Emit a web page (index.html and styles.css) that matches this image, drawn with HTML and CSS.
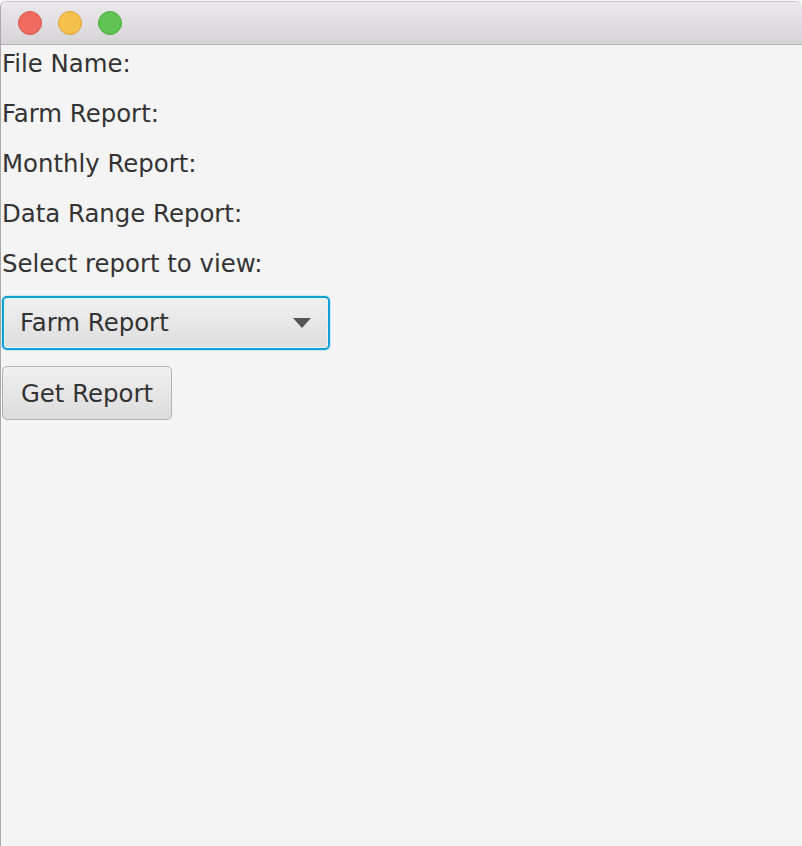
FILE: index.html
```html
<!DOCTYPE html>
<html>
<head>
<meta charset="utf-8">
<link rel="stylesheet" href="styles.css">
</head>
<body>
<div class="window">
  <div class="titlebar">
    <span class="light red"></span>
    <span class="light yellow"></span>
    <span class="light green"></span>
  </div>
  <div class="content">
    <div class="labels">
      <div class="label">File Name:</div>
      <div class="label">Farm Report:</div>
      <div class="label">Monthly Report:</div>
      <div class="label">Data Range Report:</div>
      <div class="label">Select report to view:</div>
    </div>
    <div class="combo">
      <span class="combo-text">Farm Report</span>
      <svg class="arrow" width="18" height="10" viewBox="0 0 18 10"><path d="M0 0 L18 0 L9 10 Z" fill="#555"/></svg>
    </div>
    <button class="btn">Get Report</button>
  </div>
</div>
</body>
</html>
```
FILE: styles.css
```css
html, body {
  margin: 0;
  padding: 0;
  height: 100%;
  background: #f7f7f7;
  overflow: hidden;
}
.window {
  margin-top: 1px;
  height: calc(100% - 1px);
  box-sizing: border-box;
  border-left: 1px solid #a9a9a9;
  border-top: 1px solid #c9c9c9;
  border-top-left-radius: 6px;
  border-top-right-radius: 7px;
  background: #f4f4f4;
  overflow: hidden;
  display: flex;
  flex-direction: column;
}
.titlebar {
  height: 42px;
  flex: none;
  background: linear-gradient(#ebe9eb, #d5d3d5);
  border-bottom: 1px solid #b1b1b1;
  display: flex;
  align-items: center;
  gap: 16px;
  padding-left: 17px;
}
.light {
  width: 24px;
  height: 24px;
  border-radius: 50%;
  box-sizing: border-box;
}
.red { background: #ef6a5f; border: 1px solid #d9544a; }
.yellow { background: #f6c04c; border: 1px solid #dea436; }
.green { background: #60c454; border: 1px solid #4ea83f; }
.content {
  flex: 1;
  padding: 5px 0 0 0;
  font-family: "DejaVu Sans", sans-serif;
  font-size: 24.4px;
  color: #333333;
}
.labels {
  display: flex;
  flex-direction: column;
  gap: 22px;
  padding-left: 1px;
}
.label {
  line-height: 28px;
  white-space: nowrap;
}
.combo {
  margin: 18px 0 0 1px;
  width: 328px;
  height: 54px;
  box-sizing: border-box;
  border: 2px solid #0fa0d6;
  border-radius: 5px;
  box-shadow: 0 0 0 1px rgba(15,160,214,0.18), inset 0 0 0 1px #e8f3f8;
  background: linear-gradient(#f0f0f0, #dedede);
  display: flex;
  align-items: center;
  justify-content: space-between;
  padding: 0 17px 0 16px;
}
.combo-text {
  line-height: 28px;
}
.arrow {
  display: block;
}
.btn {
  display: block;
  margin: 16px 0 0 1px;
  width: 170px;
  height: 54px;
  box-sizing: border-box;
  border: 1px solid #b3b3b3;
  border-radius: 5px;
  background: linear-gradient(#f0f0f0, #dcdcdc);
  font-family: "DejaVu Sans", sans-serif;
  font-size: 24.4px;
  color: #333333;
  padding: 0 0 0 0;
  text-align: center;
}
```
